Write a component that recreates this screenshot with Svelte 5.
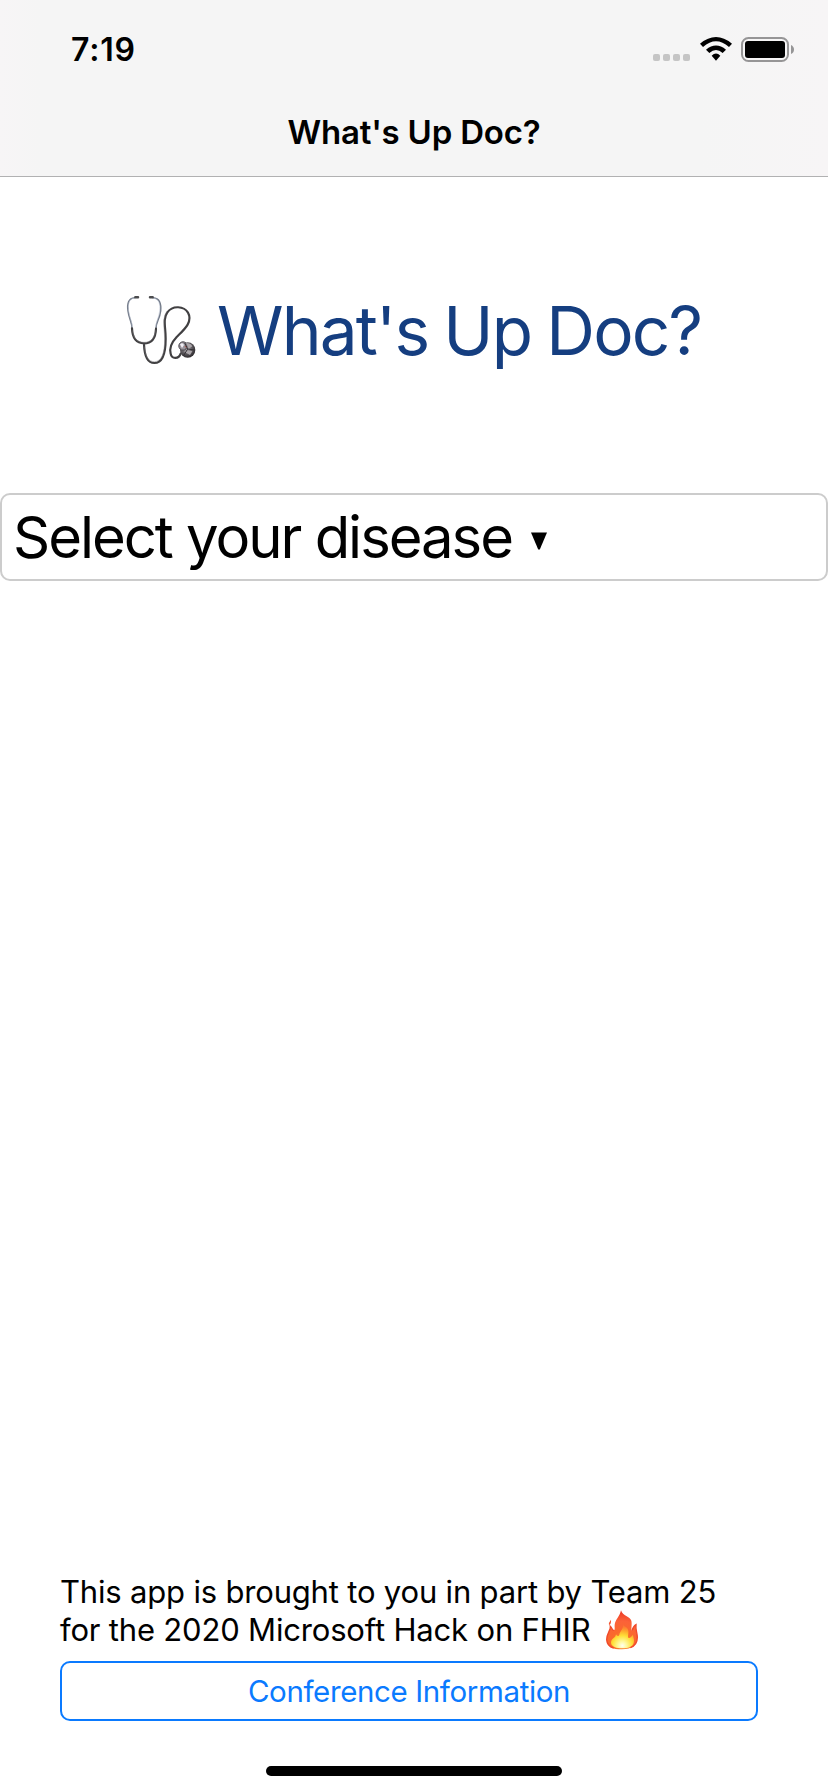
<script>
  const dots = [0, 1, 2, 3];
</script>

<div class="screen">
  <header>
    <div class="status">
      <span class="time">7:19</span>
      <div class="indicators">
        <div class="dots">
          {#each dots as d (d)}<i></i>{/each}
        </div>
        <svg class="wifi" width="32" height="24" viewBox="0 0 96 72" aria-hidden="true">
          <path d="M0 20Q48-20 96 20L87 30Q48-5 9 30Z" />
          <path d="M18 38Q48 13 78 38L68 48Q48 30 28 48Z" />
          <path d="M35 56Q48 43 61 56L48 71Z" />
        </svg>
        <svg class="battery" width="54" height="26" viewBox="0 0 54 26" aria-hidden="true">
          <rect x="1" y="1" width="46" height="23" rx="6.500" fill="none" stroke="#969596" stroke-width="2" />
          <rect x="4" y="4" width="40" height="17" rx="3" />
          <path d="M50 8Q53 9.500 53 12.500T50 17Z" fill="#969596" />
        </svg>
      </div>
    </div>
    <div class="nav"><span>What's Up Doc?</span></div>
  </header>

  <main>
    <h1>
      <svg width="76" height="76" viewBox="45 40 228 228" fill="none" aria-hidden="true">
        <defs>
          <radialGradient id="disc" cx=".42" cy=".38" r=".65">
            <stop offset="0" stop-color="#c9c5ca" />
            <stop offset=".45" stop-color="#6a666b" />
            <stop offset="1" stop-color="#292629" />
          </radialGradient>
        </defs>
        <g stroke-linecap="round">
          <path d="M74 54C55 55 51 72 54 94C57 118 66 126 66 146M129 54C149 55 154 72 152 94C149 120 138 126 138 146" stroke="#737b89" stroke-width="4.500" />
          <path d="M73 55C57 57 53 73 56 94C59 116 67 126 67 144M130 55C147 57 151 73 149 94C146 117 137 126 137 144" stroke="#b8c1d0" stroke-width="1.500" />
          <path d="M66 146C67 175 79 191 102 191C125 191 137 174 138 147M102 192C103 228 112 250 133 250C160 250 167 220 167 177C167 142 158 118 172 98C188 76 222 79 234 99C250 127 221 151 200 172C183 190 178 206 182 222C185 240 207 238 212 222" stroke="#414042" stroke-width="6.500" />
          <path d="M68 153C70 176 81 188 102 188C124 188 134 174 136 153M104 202C105 229 115 246 133 246C155 246 164 220 164 178C163 143 156 116 170 96" stroke="#807e82" stroke-width="1.300" />
        </g>
        <path d="M76 53H84M120 53H128" stroke="#4b4b4e" stroke-width="7.500" stroke-linecap="round" />
        <circle cx="233" cy="211" r="23" fill="url(#disc)" />
        <circle cx="219" cy="199" r="12.500" fill="#9a959c" stroke="#474449" stroke-width="3" />
        <path d="M210 194Q218 186 222 196L216 205Z" fill="#f0edf3" />
        <path d="M228 190Q242 190 247 200L236 207ZM222 216Q234 209 247 215L240 226Z" fill="#aaa5a9" />
        <path d="M224 190L233 208L254 211M233 208L220 229" stroke="#343135" stroke-width="3" />
        <path d="M225 199L229 204" stroke="#a44f49" stroke-width="3" />
      </svg>
      <span>What's Up Doc?</span>
    </h1>
    <button class="select" type="button">
      <span>Select your disease</span>
      <svg width="16" height="18" viewBox="0 0 16 18" aria-hidden="true"><path d="M0 .5H16L9 17Q8 18.500 7 17Z" /></svg>
    </button>
  </main>

  <footer>
    <p>
      <span class="line first">This app is brought to you in part by Team 25</span>
      <span class="line second"><span>for the 2020 Microsoft Hack on FHIR</span>
        <svg width="32" height="40" viewBox="49 29 96 120" aria-hidden="true">
          <defs>
            <radialGradient id="flame" gradientUnits="userSpaceOnUse" cx="98" cy="125" r="90">
              <stop offset="0" stop-color="#fd9b2c" />
              <stop offset=".35" stop-color="#fa6a2c" />
              <stop offset=".7" stop-color="#fb6238" />
              <stop offset="1" stop-color="#ee3c26" />
            </radialGradient>
            <radialGradient id="core" gradientUnits="userSpaceOnUse" cx="98" cy="136" r="60">
              <stop offset="0" stop-color="#fffff0" />
              <stop offset=".2" stop-color="#fff9a0" />
              <stop offset=".5" stop-color="#ffdf38" />
              <stop offset=".75" stop-color="#ffa52c" />
              <stop offset="1" stop-color="#fb7034" />
            </radialGradient>
          </defs>
          <path d="M94 30C91 48 77 57 75 73C74 80 77 87 73 90C68 91 67 82 62 78C64 89 51 99 51 118C51 139 69 147 97 147C127 147 143 134 143 111C143 98 137 88 139 73C132 77 129 84 127 91C123 87 128 72 125 61C121 48 99 48 94 30Z" fill="url(#flame)" />
          <path d="M73 90C68 91 67 82 62 78C64 89 51 99 51 118C52 132 61 140 72 143M143 111C143 98 137 88 139 73C132 77 129 84 127 91M143 111C143 128 134 138 122 142" fill="none" stroke="#f04a2a" stroke-width="4" />
          <path d="M99 72C104 84 91 92 89 103C87 109 82 108 79 102C78 114 64 114 64 127C65 139 80 144 98 144C119 144 133 137 133 121C133 113 130 108 130 103C125 108 122 114 117 113C112 108 119 99 115 88C111 79 104 80 99 72Z" fill="url(#core)" />
          <path d="M64 58Q56 67 58 74Q65 72 64 58Z" fill="#f35430" />
        </svg>
      </span>
    </p>
    <button class="info" type="button"><span>Conference Information</span></button>
    <div class="home"></div>
  </footer>
</div>

<style>
  :global(body) { margin: 0; background: #fff; }
  .screen { box-sizing: border-box; width: 828px; height: 1792px; display: flex; flex-direction: column; background: #fff; color: #000; font-family: Inter, "Liberation Sans", sans-serif; overflow: hidden; }
  span { white-space: nowrap; }
  svg { display: block; flex: none; }
  header { box-sizing: border-box; height: 177px; border-bottom: 1px solid #b1b1b2; background: linear-gradient(90deg, #f7f5f6 0, #f5f5f5 40px, #f5f5f5 700px, #f7f5f6 100%); }
  .status { height: 88px; padding: 0 33px 0 71px; display: flex; justify-content: space-between; align-items: flex-start; }
  .time { margin-top: 30px; font-size: 32px; line-height: 40px; font-weight: 600; letter-spacing: 0.8px; }
  .indicators { display: flex; align-items: flex-start; padding-top: 37px; }
  .dots { display: flex; gap: 3px; margin: 17px 9.5px 0 0; }
  .dots i { width: 7px; height: 7px; border-radius: 2px; background: #c5c5c5; }
  .wifi { margin-right: 9.5px; }
  .nav { height: 88px; display: flex; justify-content: center; align-items: center; font-size: 33px; line-height: 40px; font-weight: 600; letter-spacing: -0.2px; }
  main { flex: 1; }
  h1 { margin: 0; height: 316px; padding: 116px 0 0 125px; box-sizing: border-box; display: flex; align-items: flex-start; color: #153e80; font-size: 67.5px; line-height: 80px; font-weight: 400; letter-spacing: -1.85px; word-spacing: -2px; }
  h1 span { margin: -2px 0 0 16px; }
  button { font: inherit; color: inherit; background: none; margin: 0; box-sizing: border-box; display: flex; align-items: center; }
  .select { width: 828px; height: 88px; border: 2px solid #ccc; border-radius: 10px; padding: 0 0 0 11px; font-size: 58px; line-height: 70px; letter-spacing: -2.03px; word-spacing: 0; }
  .select svg { margin: 8px 0 0 19px; }
  footer { height: 219px; padding: 0 70px 0 60px; }
  p { margin: 0; font-size: 31px; line-height: 38px; letter-spacing: -0.18px; }
  .line { display: flex; height: 38px; }
  .second svg { margin: -1px 0 0 16px; }
  .info { width: 698px; height: 60px; margin-top: 12px; border: 2px solid #0a7aff; border-radius: 10px; justify-content: center; color: #0a7aff; font-size: 29.5px; line-height: 36px; letter-spacing: -0.38px; padding: 0; }
  .home { width: 296px; height: 10px; border-radius: 5px; background: #000; margin: 45px 0 0 206px; }
</style>
